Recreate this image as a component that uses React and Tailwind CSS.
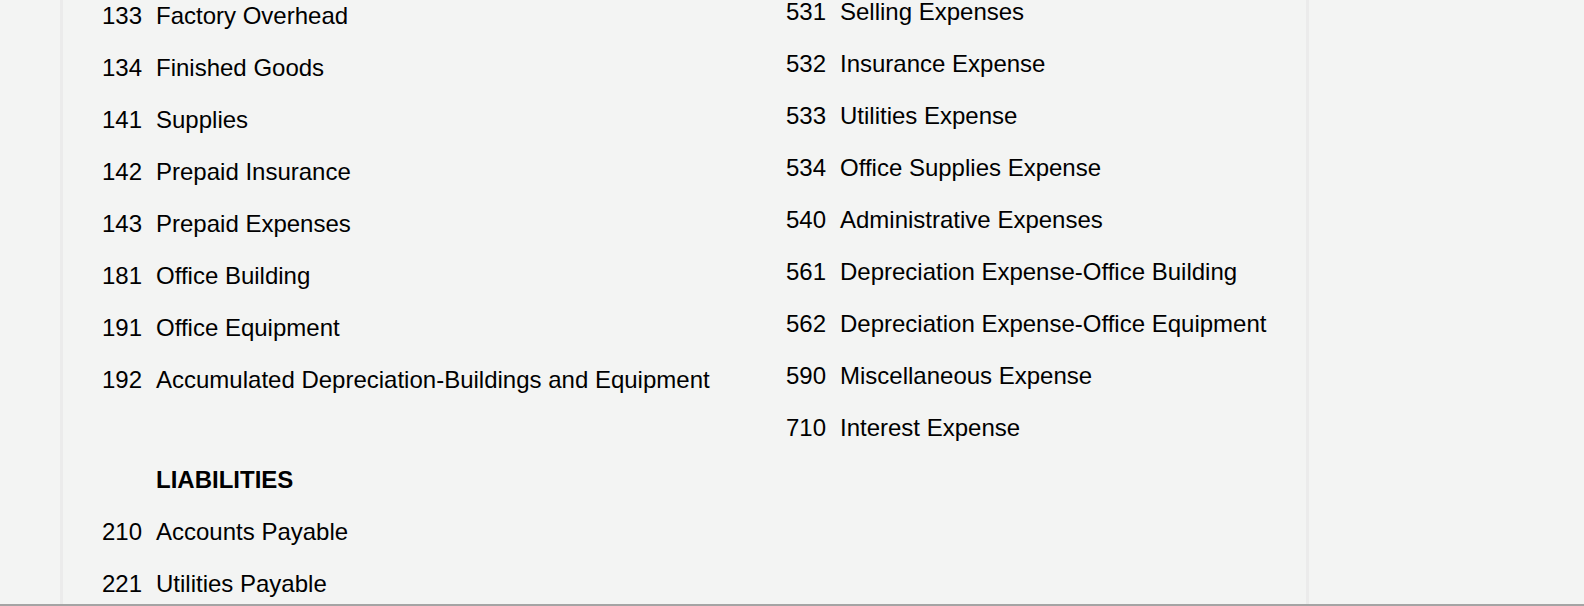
import React from "react";

const LEFT_ROWS = [
  { no: "133", name: "Factory Overhead" },
  { no: "134", name: "Finished Goods" },
  { no: "141", name: "Supplies" },
  { no: "142", name: "Prepaid Insurance" },
  { no: "143", name: "Prepaid Expenses" },
  { no: "181", name: "Office Building" },
  { no: "191", name: "Office Equipment" },
  { no: "192", name: "Accumulated Depreciation-Buildings and Equipment" },
  { spacer: true },
  { heading: "LIABILITIES" },
  { no: "210", name: "Accounts Payable" },
  { no: "221", name: "Utilities Payable" },
];

const RIGHT_ROWS = [
  { no: "531", name: "Selling Expenses" },
  { no: "532", name: "Insurance Expense" },
  { no: "533", name: "Utilities Expense" },
  { no: "534", name: "Office Supplies Expense" },
  { no: "540", name: "Administrative Expenses" },
  { no: "561", name: "Depreciation Expense-Office Building" },
  { no: "562", name: "Depreciation Expense-Office Equipment" },
  { no: "590", name: "Miscellaneous Expense" },
  { no: "710", name: "Interest Expense" },
];

function AccountList({ rows }) {
  return (
    <div className="flex flex-col">
      {rows.map((row, i) => {
        if (row.spacer) return <div key={i} className="h-[48px]" />;
        if (row.heading) {
          return (
            <div key={i} className="flex items-center h-[52px]">
              <span className="w-[54px] shrink-0" />
              <span className="font-bold">{row.heading}</span>
            </div>
          );
        }
        return (
          <div key={i} className="flex items-center h-[52px] whitespace-nowrap">
            <span className="w-[54px] shrink-0">{row.no}</span>
            <span>{row.name}</span>
          </div>
        );
      })}
    </div>
  );
}

export default function App() {
  return (
    <div className="h-[606px] w-full flex flex-col overflow-hidden bg-[#f3f4f3] text-black text-[24px] font-['Liberation_Sans',Arial,sans-serif]">
      <div className="flex-1 min-h-0 overflow-hidden pl-[60px]">
        <div className="w-[1249px] h-full border-x-[3px] border-[#ebebeb] bg-[#f3f4f3] overflow-hidden">
          {/* chart of accounts, two columns */}
          <div className="grid grid-cols-[684px_1fr] pl-[39px] -mt-[13px]">
            <div className="pt-[3px]">
              <AccountList rows={LEFT_ROWS} />
            </div>
            <div className="-mt-[1px]">
              <AccountList rows={RIGHT_ROWS} />
            </div>
          </div>
        </div>
      </div>
      <div className="h-[2px] bg-[#a4a4a4]" />
    </div>
  );
}
